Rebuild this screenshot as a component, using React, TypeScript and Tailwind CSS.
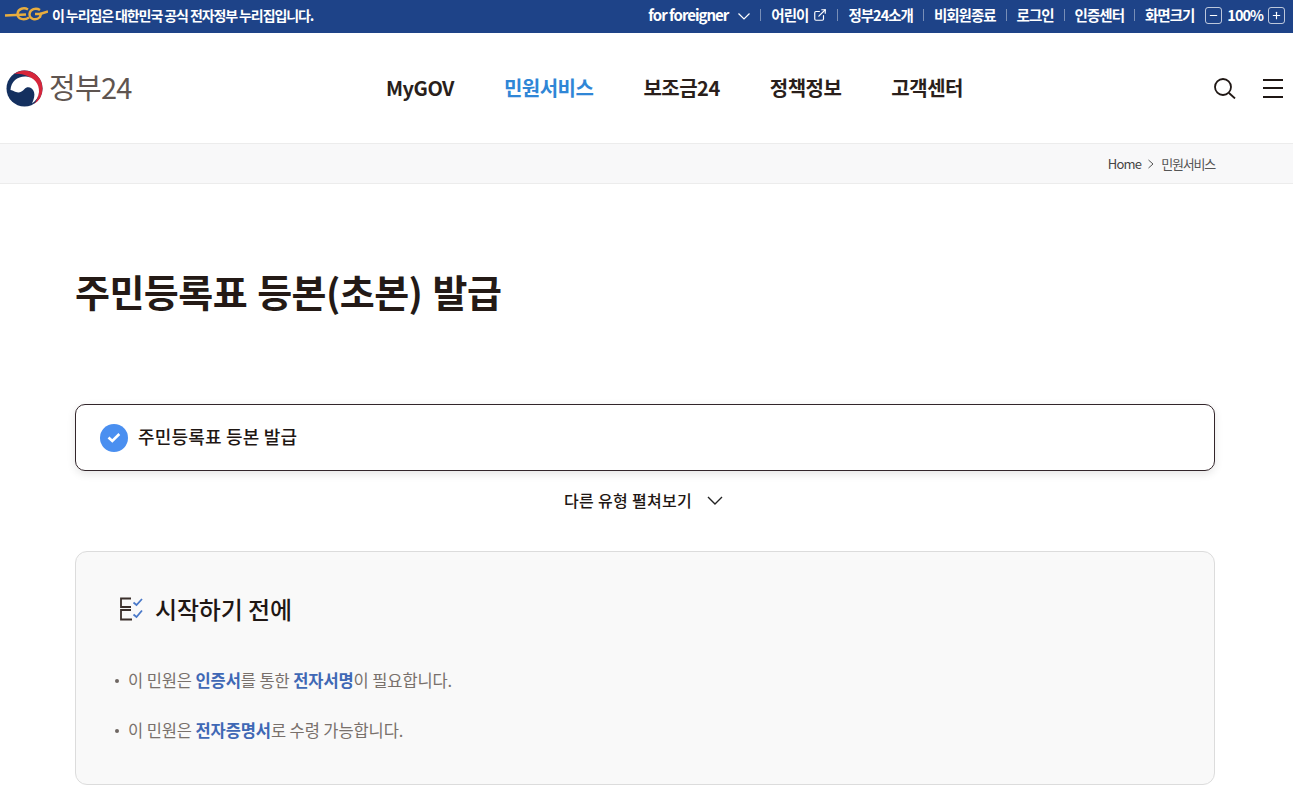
import { ExternalLink, Minus, Plus } from 'lucide-react'

const FONT = '[font-family:"Noto_Sans_CJK_KR","Noto_Sans",sans-serif]'

const UTILITY = ['비회원종료', '로그인', '인증센터']
const NAV = ['MyGOV', '민원서비스', '보조금24', '정책정보', '고객센터']

function Divider() {
  return <span className="h-3 w-px bg-white/40" />
}

function EgLogo() {
  return (
    <svg width="44" height="20" viewBox="0 0 44 20" fill="none" stroke="#e8ad3f" strokeWidth="2.400">
      <path d="M1 10.500L22 9.500" />
      <path d="M24 4.500C20 2 14 3.500 13.500 9c0 5 6.500 7 11.500 3.500" />
      <path d="M36 5c-4-2.500-10-1-10.500 4 0 5.500 6.500 7 10.500 3l1-3h-6" />
      <path d="M36 9l8-2.500" />
    </svg>
  )
}

function GovLogo() {
  return (
    <svg width="37" height="37" viewBox="0 0 37 37">
      <circle cx="18.500" cy="18.500" r="18" fill="#14305f" />
      <path d="M8 4A18 18 0 0 1 36.500 18.500 18 18 0 0 1 28 34C33 28 34 20 30 13 25 6 15 3 8 4z" fill="#d6263b" />
      <path d="M4.500 20C5 11 12 6 20 6.500 28 7 33.500 14 33 22 32.500 27 30 31 26 33.500 28 29 29 25 28 22 26.500 17 21 16 18.500 19 16 22 13 23 10 22 8 21.500 6 20 4.500 20z" fill="#fff" />
    </svg>
  )
}

function ChecklistIcon() {
  return (
    <svg width="26" height="26" viewBox="0 0 26 26" fill="none" strokeWidth="1.800" className="shrink-0">
      <path d="M12 2.500H2v8.500h10" stroke="#3a2f2b" />
      <path d="M12 14H2v9.500h11" stroke="#3a2f2b" />
      <path d="M14.500 6.500l3 2.500 5.500-6" stroke="#4a79c9" />
      <path d="M14.500 18.500l3 2.500 5.500-6.500" stroke="#4a79c9" />
    </svg>
  )
}

export default function App() {
  return (
    <div className={`${FONT} h-[796px] overflow-hidden bg-white text-[#1f1714]`}>
      <div className="flex h-[33px] items-center justify-between bg-[#1e4388] pl-[4px] pr-[8px] font-bold text-white">
        <div className="flex items-center gap-[4px] pb-[3px] text-[14px] tracking-[-1.1px]">
          <EgLogo />
          <span>이 누리집은 대한민국 공식 전자정부 누리집입니다.</span>
        </div>
        <div className="flex items-center gap-[10px] pb-[3px] text-[14.5px] tracking-[-1px]">
          <span className="flex items-center gap-[10px] text-[15px]">
            for foreigner
            <svg width="12" height="7" viewBox="0 0 12 7" fill="none" stroke="#fff" strokeWidth="1.200" className="mt-[3px]">
              <path d="M.5.500L6 6l5.500-5.500" />
            </svg>
          </span>
          <Divider />
          <span className="flex items-center gap-[5px]">
            어린이
            <ExternalLink size={14} strokeWidth={2} />
          </span>
          <Divider />
          <span>정부24소개</span>
          <Divider />
          {UTILITY.map((item) => (
            <span key={item} className="flex items-center gap-[10px]">
              {item}
              <Divider />
            </span>
          ))}
          <span className="flex items-center gap-[5px]">
            <span className="mr-[6px]">화면크기</span>
            <span className="flex h-[17px] w-[17px] items-center justify-center rounded-[3px] border border-white/70">
              <Minus size={11} strokeWidth={2.500} />
            </span>
            <span className="text-[14.5px]">100%</span>
            <span className="flex h-[17px] w-[17px] items-center justify-center rounded-[3px] border border-white/70">
              <Plus size={11} strokeWidth={2.500} />
            </span>
          </span>
        </div>
      </div>

      <header className="flex h-[110px] items-center pl-[6px] pr-[10px]">
        <div className="flex w-[380px] items-center gap-[6px]">
          <GovLogo />
          <span className="pb-[3px] text-[29px] leading-none tracking-[-0.7px] text-[#5f5550]">정부24</span>
        </div>
        <nav className="flex items-center gap-[50px] text-[20px] font-bold tracking-[-0.5px]">
          {NAV.map((item) => (
            <span key={item} className={item === '민원서비스' ? 'text-[#2f86d6]' : 'text-[#2a1f1b]'}>
              {item}
            </span>
          ))}
        </nav>
        <div className="ml-auto flex items-center gap-[27px]">
          <svg width="22" height="21" viewBox="0 0 22 21" fill="none" stroke="#1f1714" strokeWidth="1.800">
            <circle cx="9" cy="9" r="8" />
            <path d="M15 15l6 5.500" />
          </svg>
          <div className="flex w-[20px] flex-col gap-[6.500px]">
            <span className="h-[2px] bg-[#1f1714]" />
            <span className="h-[2px] bg-[#1f1714]" />
            <span className="h-[2px] bg-[#1f1714]" />
          </div>
        </div>
      </header>

      <div className="flex h-[41px] items-center justify-end gap-[6px] border-y border-[#ececec] bg-[#f8f8f9] pr-[78px] text-[13px] tracking-[-0.8px] text-[#444]">
        <span>Home</span>
        <svg width="8" height="10" viewBox="0 0 8 10" fill="none" stroke="#555" strokeWidth="1">
          <path d="M1.500 1l4.500 4-4.500 4" />
        </svg>
        <span className="tracking-[-1.2px] text-[#555]">민원서비스</span>
      </div>

      <main className="mx-[75px] w-[1140px]">
        <h1 className="mt-[81px] text-[38px] font-bold leading-[52px] tracking-[-0.55px] [word-spacing:2px] text-[#241a16]">
          주민등록표 등본(초본) 발급
        </h1>

        <div className="mt-[87px] flex h-[67px] items-center gap-[10px] rounded-[10px] border border-[#33262b] bg-white pl-[24px] shadow-[0_3px_8px_rgba(0,0,0,0.1)]">
          <span className="flex h-[28px] w-[28px] items-center justify-center rounded-full bg-[#4a8ff0]">
            <svg width="14" height="11" viewBox="0 0 14 11" fill="none" stroke="#fff" strokeWidth="2.600">
              <path d="M1.500 5.500l3.800 3.500 7-7" />
            </svg>
          </span>
          <span className="pb-[3px] text-[18px] font-medium tracking-[0.2px]">주민등록표 등본 발급</span>
        </div>

        <div className="mt-[17px] flex h-[25px] items-center justify-center gap-[15px] pr-[3px] text-[16px] font-medium tracking-[0.3px]">
          <span className="pb-[2px]">다른 유형 펼쳐보기</span>
          <svg width="16" height="9" viewBox="0 0 16 9" fill="none" stroke="#222" strokeWidth="1.400">
            <path d="M1 1l7 7 7-7" />
          </svg>
        </div>

        <section className="mt-[38px] h-[234px] rounded-[12px] border border-[#dcdcdc] bg-[#f9f9f9] pl-[39px]">
          <div className="mt-[41px] flex h-[32px] items-center gap-[10px] pl-[4px]">
            <ChecklistIcon />
            <h2 className="text-[24px] font-medium tracking-[-0.15px]">시작하기 전에</h2>
          </div>
          <ul className="mt-[44px] flex flex-col gap-[27px] text-[16.5px] leading-[23px] tracking-[-0.1px] text-[#78706b]">
            <li className="flex items-center gap-[9px]">
              <span className="h-[4px] w-[4px] rounded-full bg-[#6f6763]" />
              <span>
                이 민원은 <b className="font-bold text-[#3f68b5]">인증서</b>를 통한{' '}
                <b className="font-bold text-[#3f68b5]">전자서명</b>이 필요합니다.
              </span>
            </li>
            <li className="flex items-center gap-[9px]">
              <span className="h-[4px] w-[4px] rounded-full bg-[#6f6763]" />
              <span>
                이 민원은 <b className="font-bold text-[#3f68b5]">전자증명서</b>로 수령 가능합니다.
              </span>
            </li>
          </ul>
        </section>
      </main>
    </div>
  )
}
